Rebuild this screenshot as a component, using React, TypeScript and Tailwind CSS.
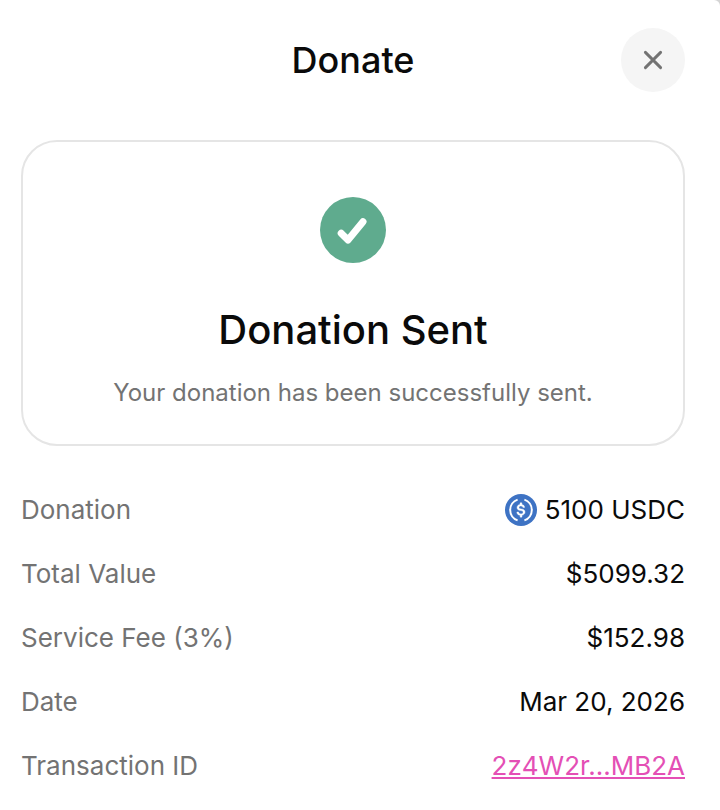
import type { ReactNode } from "react";

const CloseIcon = () => (
  <svg width="20" height="20" viewBox="0 0 20 20" fill="none" aria-hidden="true">
    <path
      d="M2.4 2.4L17.6 17.6M17.6 2.4L2.4 17.6"
      stroke="currentColor"
      strokeWidth="2.9"
      strokeLinecap="round"
    />
  </svg>
);

const SuccessIcon = () => (
  <svg width="66" height="66" viewBox="0 0 66 66" fill="none" aria-hidden="true">
    <circle cx="33" cy="33" r="33" fill="#5fab8e" />
    <path
      d="M21.2 36.2L28 43L43 24.7"
      stroke="white"
      strokeWidth="7"
      strokeLinecap="round"
      strokeLinejoin="round"
    />
  </svg>
);

const UsdcIcon = () => (
  <svg width="32" height="32" viewBox="0 0 32 32" fill="none" aria-hidden="true">
    <circle cx="16" cy="16" r="16" fill="#3e73c4" />
    <path
      fill="white"
      stroke="white"
      strokeWidth="0.4"
      d="M20.022 18.124c0-2.124-1.28-2.852-3.84-3.156-1.828-.243-2.193-.728-2.193-1.578 0-.85.61-1.396 1.828-1.396 1.097 0 1.707.364 2.011 1.275a.458.458 0 00.427.303h.975a.416.416 0 00.427-.425v-.06a3.04 3.04 0 00-2.743-2.489V9.142c0-.243-.183-.425-.487-.486h-.915c-.243 0-.426.182-.487.486v1.396c-1.829.242-2.986 1.456-2.986 2.974 0 2.002 1.218 2.791 3.778 3.095 1.707.303 2.255.668 2.255 1.639 0 .97-.853 1.638-2.011 1.638-1.585 0-2.133-.667-2.316-1.578-.06-.242-.244-.364-.427-.364h-1.036a.416.416 0 00-.426.425v.06c.243 1.518 1.219 2.61 3.23 2.914v1.457c0 .242.183.425.487.485h.915c.243 0 .426-.182.487-.485V21.34c1.829-.303 3.047-1.578 3.047-3.217z"
    />
    <path
      d="M12.6 5.6A11 11 0 0 0 12.6 26.4M19.4 5.6A11 11 0 0 1 19.4 26.4"
      stroke="white"
      strokeWidth="2"
    />
  </svg>
);

const details: { label: string; value: ReactNode }[] = [
  {
    label: "Donation",
    value: (
      <>
        <UsdcIcon />
        5100 USDC
      </>
    ),
  },
  { label: "Total Value", value: "$5099.32" },
  { label: "Service Fee (3%)", value: "$152.98" },
  { label: "Date", value: "Mar 20, 2026" },
  {
    label: "Transaction ID",
    value: (
      <a
        href="#transaction"
        className="text-[#e44fb5] underline decoration-2 underline-offset-2"
      >
        2z4W2r...MB2A
      </a>
    ),
  },
];

const App = () => {
  return (
    <div className="min-h-screen bg-neutral-300 font-['Inter',sans-serif]">
      <main className="min-h-screen rounded-tr-md bg-white pt-7 pr-[35px] pb-6 pl-[21px] text-[#0a0a0a]">
        <header className="grid grid-cols-[64px_1fr_64px] items-center">
          <h1 className="col-start-2 text-center text-4xl font-medium">
            Donate
          </h1>
          <button
            type="button"
            aria-label="Close"
            className="flex size-16 items-center justify-center rounded-full bg-neutral-100 text-[#737373]"
          >
            <CloseIcon />
          </button>
        </header>

        <section className="mt-12 flex flex-col items-center rounded-[36px] border-2 border-[#e5e5e5] px-6 pt-[55px] pb-[35px] text-center">
          <SuccessIcon />
          <h2 className="mt-10 text-[40px] leading-[54px] font-medium">
            Donation Sent
          </h2>
          <p className="mt-5 text-2xl text-[#737373]">
            Your donation has been successfully sent.
          </p>
        </section>

        <dl className="mt-11 flex flex-col gap-6 text-[26px] leading-10">
          {details.map((item) => (
            <div
              key={item.label}
              className="flex items-center justify-between gap-4"
            >
              <dt className="text-[#737373]">{item.label}</dt>
              <dd className="flex items-center gap-2">{item.value}</dd>
            </div>
          ))}
        </dl>
      </main>
    </div>
  );
};

export default App;
